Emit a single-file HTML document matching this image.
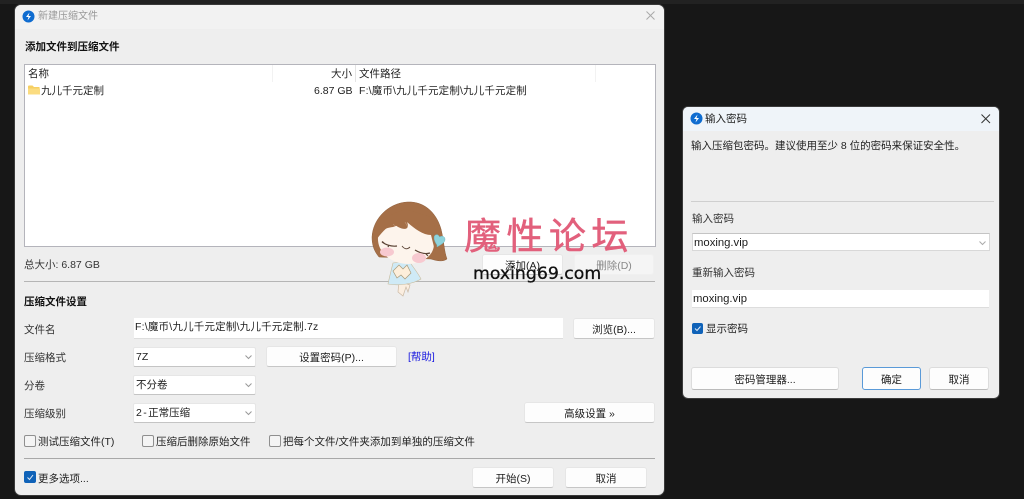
<!DOCTYPE html>
<html><head><meta charset="utf-8"><style>
html,body{margin:0;padding:0;width:1024px;height:499px;overflow:hidden;background:#171717}
body{position:relative;font-family:"Liberation Sans","Noto Sans CJK SC",sans-serif;font-size:10.5px;color:#222}
div{position:absolute;box-sizing:border-box;white-space:nowrap}
.t{line-height:14px;height:14px}
.b{background:#fdfdfd;border:1px solid #e6e6e6;border-bottom-color:#c6c6c6;border-radius:3px;text-align:center;line-height:22px;color:#1c1c1c}
.i{background:#fff;border-bottom:1px solid #ddd;line-height:18px;padding-left:3px;color:#1c1c1c}
.c{background:#fff;border:1px solid #e6e6e6;border-bottom-color:#c4c4c4;border-radius:2px;line-height:19px;padding-left:2px;color:#1c1c1c}
.ck{width:12px;height:12px;border:1px solid #8f8f8f;border-radius:2px;background:#f4f4f4}
.on{background:#0f62b8;border-color:#0f62b8}
svg{position:absolute;overflow:visible}
.hr{height:1px;background:#b5b5b5}
</style></head><body>
<div style="left:0;top:0;width:1024px;height:4px;background:#222"></div>

<!-- main window -->
<div style="left:15px;top:5px;width:649px;height:490px;background:#eeeeee;border-radius:6px;box-shadow:0 0 0 1px #3a3a3a"></div>
<div style="left:15px;top:5px;width:649px;height:24px;background:#f2f2f2;border-radius:6px 6px 0 0"></div>
<svg style="left:22px;top:10px" width="13" height="13"><circle cx="6.500" cy="6.500" r="6" fill="#0f6cd0"/><path d="M7.500 2.500 4 7h2.500L5.500 10.500 9 6H6.500z" fill="#fff"/></svg>
<div class="t" style="left:38px;top:10px;font-size:10px;color:#999">新建压缩文件</div>
<svg style="left:646px;top:11px" width="10" height="10"><path d="M.5.5l8 8M8.5.5l-8 8" stroke="#aaa" stroke-width="1" fill="none"/></svg>
<div class="t" style="left:25px;top:40px;font-weight:bold;color:#111">添加文件到压缩文件</div>

<div style="left:24px;top:64px;width:632px;height:183px;background:#fff;border:1px solid #b4b4bb"></div>
<div style="left:272px;top:65px;width:1px;height:17px;background:#f2f2f2"></div>
<div style="left:355px;top:65px;width:1px;height:17px;background:#e4e4e4"></div>
<div style="left:595px;top:65px;width:1px;height:17px;background:#f2f2f2"></div>
<div class="t" style="left:28px;top:67px;color:#222">名称</div>
<div class="t" style="left:331px;top:67px;color:#222">大小</div>
<div class="t" style="left:359px;top:67px;color:#222">文件路径</div>
<svg style="left:28px;top:85px" width="12" height="10"><path d="M0 1.500Q0 .5 1 .5H4.500L6 2H11.500V9.500H0z" fill="#f6cf62"/><path d="M0 3.500H12V9.500H0z" fill="#fbdc80"/></svg>
<div class="t" style="left:41px;top:84px">九儿千元定制</div>
<div class="t" style="left:314px;top:84px;color:#1c1c1c">6.87 GB</div>
<div class="t" style="left:359px;top:84px;letter-spacing:.15px">F:\魔币\九儿千元定制\九儿千元定制</div>

<div class="t" style="left:24px;top:258px;color:#333">总大小: 6.87 GB</div>
<div class="b" style="left:482px;top:254px;width:81px;height:21px;">添加(A)</div>
<div class="b" style="left:574px;top:254px;width:80px;height:21px;background:#f5f5f5;border-color:#f0f0f0;color:#888">删除(D)</div>
<div class="hr" style="left:24px;top:281px;width:631px"></div>
<div class="t" style="left:24px;top:295px;font-weight:bold;color:#111">压缩文件设置</div>

<div class="t" style="left:24px;top:323px;color:#333">文件名</div>
<div class="i" style="left:134px;top:318px;width:429px;height:21px;line-height:19px;padding-left:1px;letter-spacing:.2px">F:\魔币\九儿千元定制\九儿千元定制.7z</div>
<div class="b" style="left:573px;top:318px;width:82px;height:21px">浏览(B)...</div>

<div class="t" style="left:24px;top:351px;color:#333">压缩格式</div>
<div class="c" style="left:133px;top:347px;width:123px;height:20px">7Z</div>
<svg style="left:245px;top:355px" width="7" height="4"><path d="M.5.500 3.500 3.500 6.500.500" stroke="#999" fill="none"/></svg>
<div class="b" style="left:266px;top:346px;width:131px;height:21px">设置密码(P)...</div>
<div class="t" style="left:408px;top:350px;color:#1a1ae0">[帮助]</div>

<div class="t" style="left:24px;top:379px;color:#333">分卷</div>
<div class="c" style="left:133px;top:375px;width:123px;height:20px">不分卷</div>
<svg style="left:245px;top:383px" width="7" height="4"><path d="M.5.500 3.500 3.500 6.500.500" stroke="#999" fill="none"/></svg>

<div class="t" style="left:24px;top:407px;color:#333">压缩级别</div>
<div class="c" style="left:133px;top:403px;width:123px;height:20px;word-spacing:-1.5px">2 - 正常压缩</div>
<svg style="left:245px;top:411px" width="7" height="4"><path d="M.5.500 3.500 3.500 6.500.500" stroke="#999" fill="none"/></svg>
<div class="b" style="left:524px;top:402px;width:131px;height:21px">高级设置 »</div>

<div class="ck" style="left:24px;top:435px"></div>
<div class="t" style="left:38px;top:435px">测试压缩文件(T)</div>
<div class="ck" style="left:142px;top:435px"></div>
<div class="t" style="left:156px;top:435px">压缩后删除原始文件</div>
<div class="ck" style="left:269px;top:435px"></div>
<div class="t" style="left:283px;top:435px">把每个文件/文件夹添加到单独的压缩文件</div>
<div class="hr" style="left:24px;top:458px;width:631px;background:#a8a8a8"></div>
<div class="ck on" style="left:24px;top:471px"></div>
<svg style="left:24px;top:471px" width="12" height="12"><path d="M3.500 6.500 5.500 8.500 9 4" stroke="#dfeaf7" fill="none"/></svg>
<div class="t" style="left:38px;top:472px">更多选项...</div>
<div class="b" style="left:472px;top:467px;width:82px;height:21px">开始(S)</div>
<div class="b" style="left:565px;top:467px;width:82px;height:21px">取消</div>

<!-- password window -->
<div style="left:683px;top:107px;width:316px;height:291px;background:#eeeeee;border-radius:5px;box-shadow:0 0 0 1px #3a3a3a"></div>
<div style="left:683px;top:107px;width:316px;height:24px;background:#eff4f9;border-radius:5px 5px 0 0"></div>
<svg style="left:690px;top:112px" width="13" height="13"><circle cx="6.500" cy="6.500" r="6" fill="#0f6cd0"/><path d="M7.500 2.500 4 7h2.500L5.500 10.500 9 6H6.500z" fill="#fff"/></svg>
<div class="t" style="left:705px;top:112px;font-size:10.500px;color:#222">输入密码</div>
<svg style="left:981px;top:114px" width="10" height="10"><path d="M.5.500l8.500 8.500M9 .500l-8.500 8.500" stroke="#333" stroke-width="1" fill="none"/></svg>
<div class="t" style="left:691px;top:139px">输入压缩包密码。建议使用至少 8 位的密码来保证安全性。</div>
<div class="hr" style="left:691px;top:201px;width:303px;background:#cfcfcf"></div>
<div class="t" style="left:692px;top:212px;color:#333">输入密码</div>
<div style="left:692px;top:233px;width:298px;height:18px;background:#fff;border:1px solid #d8d8d8;border-top-color:#c4c4c4;line-height:18px;padding-left:1px;font-size:11.300px;color:#1c1c1c">moxing.vip</div>
<svg style="left:979px;top:241px" width="7" height="4"><path d="M.5.500 3.500 3.500 6.500.500" stroke="#aaa" fill="none"/></svg>
<div class="t" style="left:692px;top:266px;color:#333">重新输入密码</div>
<div class="i" style="left:692px;top:290px;width:297px;height:18px;padding-left:1px;line-height:18px;font-size:11.300px">moxing.vip</div>
<div class="ck on" style="left:692px;top:323px;width:11px;height:11px"></div>
<svg style="left:692px;top:323px" width="11" height="11"><path d="M3 5.500 5 7.500 8.500 3.500" stroke="#dfeaf7" fill="none"/></svg>
<div class="t" style="left:706px;top:322px">显示密码</div>
<div class="b" style="left:691px;top:367px;width:148px;height:23px;line-height:24px;border-color:#dcdcdc;border-bottom-color:#bbb">密码管理器...</div>
<div class="b" style="left:862px;top:367px;width:59px;height:23px;line-height:24px;border-color:#5a9ad8">确定</div>
<div class="b" style="left:929px;top:367px;width:60px;height:23px;line-height:24px;border-color:#dcdcdc;border-bottom-color:#bbb">取消</div>

<!-- watermark -->
<div style="left:464px;top:210px;font-family:'WenQuanYi Zen Hei','Noto Sans CJK SC',sans-serif;font-size:37px;line-height:46px;letter-spacing:5.500px;color:#e2607c;-webkit-text-stroke:.5px #e2607c">魔性论坛</div>
<div style="left:473px;top:262px;font-family:'DejaVu Sans',sans-serif;font-size:17.300px;line-height:24px;color:#111;-webkit-text-stroke:.3px #111">moxing69.com</div>
<svg style="left:365px;top:195px" width="95" height="105" viewBox="0 0 95 105">
<!-- legs -->
<path d="M34 86 33 97 38 101 41 92 43 97 45 90z" fill="#fbeee0" stroke="#cbb9a4" stroke-width=".7"/>
<!-- dress -->
<path d="M28 68C26 76 24 84 23 89 34 91 48 89 56 84 53 78 48 72 44 66z" fill="#cfeaf6" stroke="#c9bb9c" stroke-width=".6"/>
<!-- hands -->
<path d="M28 76 34 70 38 74 42 70 46 78 40 84 36 80 32 83z" fill="#fdeeda" stroke="#a89a7a" stroke-width=".7"/>
<!-- back hair -->
<path d="M7 42C8 22 26 6 46 7 62 8 72 20 76 34 79 46 79 56 82 64 78 67 72 66 66 64L14 62C9 56 7 50 7 42z" fill="#a56f47" stroke="#8f5f3c" stroke-width=".5"/>
<!-- face -->
<path d="M13 42C12 56 24 68 42 69 56 69 68 62 69 50 70 40 64 34 58 32L46 26 28 32C20 33 14 36 13 42z" fill="#fdf4ec"/>
<!-- bangs -->
<path d="M12 44C16 38 22 32 28 28 36 36 46 36 42 27 50 34 58 40 66 40L70 56 74 44 66 22 40 14 16 24z" fill="#a56f47"/>
<path d="M40 27 44 34M28 29 35 35" stroke="#fff" stroke-width=".5" opacity=".35"/>
<!-- eyes -->
<path d="M17 47Q24 52 32 51M19 48l-2-1.500M24 50l-1 2" stroke="#5a4234" stroke-width="1.200" fill="none"/>
<path d="M50 55Q58 60 65 58M61 59l2 2" stroke="#5a4234" stroke-width="1.200" fill="none"/>
<path d="M37 51Q41 56 45 52" stroke="#5a4234" stroke-width=".9" fill="none"/>
<ellipse cx="22" cy="57" rx="7" ry="4.500" fill="#f7c9d0"/>
<ellipse cx="54" cy="63" rx="7" ry="5" fill="#f7c9d0"/>
<!-- heart clip -->
<path d="M72 50C69 46 68 41 70.500 40 72.500 39 74 40.500 74.500 42 76.500 40.500 80 41 80 44.500 80 48 75 50 72 52z" fill="#8fd3dc" stroke="#6fb7c0" stroke-width=".5"/>
</svg>
</body></html>
